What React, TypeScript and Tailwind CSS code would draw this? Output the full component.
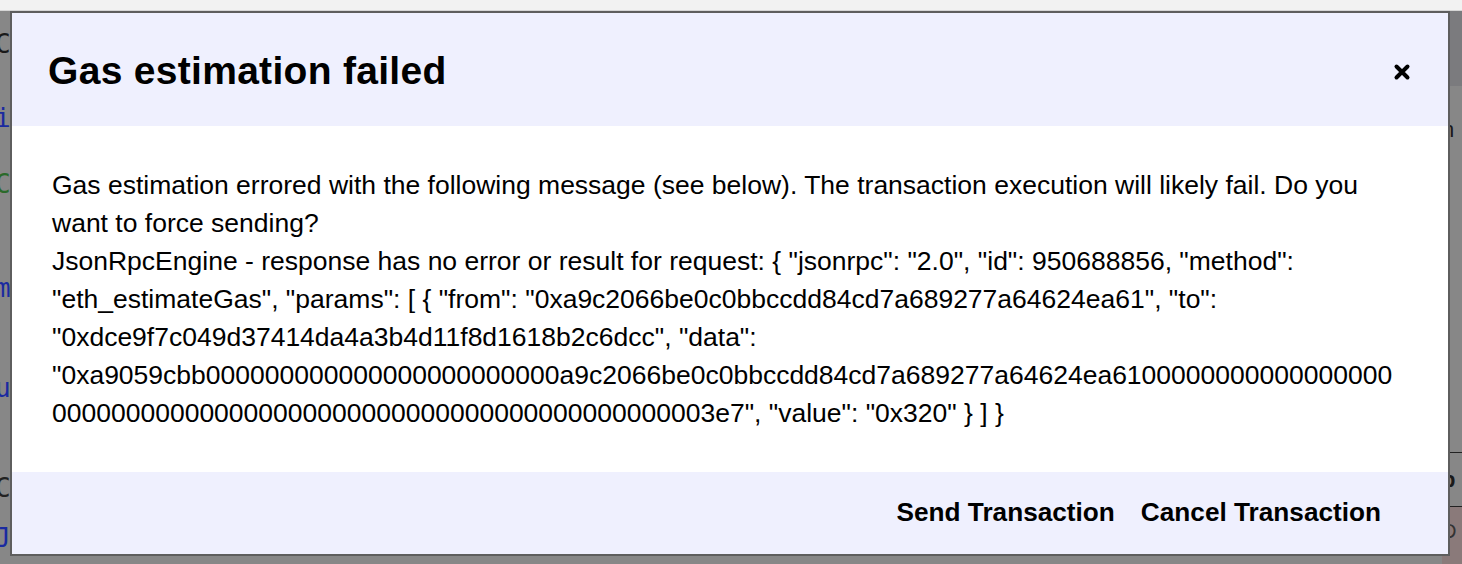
import React from 'react';

// Modal shown when gas estimation fails before sending a transaction

const MESSAGE =
  'Gas estimation errored with the following message (see below). The transaction execution will likely fail. Do you want to force sending?';

const CALL_DATA =
  '0xa9059cbb' + '0'.repeat(24) + 'a9c2066be0c0bbccdd84cd7a689277a64624ea61' + '0'.repeat(61) + '3e7';

const DETAIL =
  'JsonRpcEngine - response has no error or result for request: { "jsonrpc": "2.0", "id": 950688856, "method": "eth_estimateGas", "params": [ { "from": "0xa9c2066be0c0bbccdd84cd7a689277a64624ea61", "to": "0xdce9f7c049d37414da4a3b4d11f8d1618b2c6dcc", "data": "' +
  CALL_DATA +
  '", "value": "0x320" } ] }';

// glyphs of the code editor peeking out at the left of the dialog
const LEFT_LINES: { h: string; text: string; color: string }[] = [
  { h: 'h-[74px]', text: 'C', color: 'text-[#1a1a1a]' },
  { h: 'h-[66px]', text: 'i', color: 'text-[#1a2aa0]' },
  { h: 'h-[104px]', text: 'C', color: 'text-[#2a6a2a]' },
  { h: 'h-[100px]', text: 'm', color: 'text-[#1a2aa0]' },
  { h: 'h-[100px]', text: 'u', color: 'text-[#1a2aa0]' },
  { h: 'h-[50px]', text: 'C', color: 'text-[#222]' },
  { h: 'h-[30px]', text: 'J', color: 'text-[#1a2aa0]' },
];

function CloseIcon() {
  return (
    <svg width="18" height="18" viewBox="0 0 18 18" fill="none">
      <path d="M3.5 3.5 L14.5 14.5 M14.5 3.5 L3.5 14.5" stroke="#000" strokeWidth="4" strokeLinecap="round" />
    </svg>
  );
}

// Faint leftovers of the page behind the overlay
function Backdrop() {
  return (
    <div className="h-full flex flex-col">
      <div className="h-[11px] shrink-0 bg-[#f2f2f2] border-b border-[#d6d6d6]" />
      <div className="flex-1 flex justify-between bg-[#878787] overflow-hidden">
        <div className="w-[14px] flex flex-col pt-[18px] font-['DejaVu_Sans_Mono',monospace] text-[26px] leading-[30px] -ml-[5px]">
          {LEFT_LINES.map((l, i) => (
            <div key={i} className={`${l.h} shrink-0 ${l.color}`}>{l.text}</div>
          ))}
        </div>
        <div className="w-[20px] flex flex-col text-[22px] text-[#1a1a1a]">
          <div className="h-[75px] shrink-0 bg-[#7b7b7e]" />
          <div className="h-[60px] shrink-0 flex items-end">n</div>
          <div className="h-[135px] shrink-0 flex items-end">t</div>
          <div className="h-[172px] shrink-0 border-b border-[#222]" />
          <div className="h-[54px] shrink-0 border-b border-[#222] font-bold flex items-center">p</div>
          <div className="flex-1 bg-[#8a7a7a] text-[20px] text-[#333] leading-none pt-[14px]">D</div>
        </div>
      </div>
    </div>
  );
}

export default function App() {
  return (
    <div className="relative w-[1462px] h-[564px] overflow-hidden font-['Liberation_Sans',Arial,sans-serif] text-black">
      <Backdrop />

      <div className="absolute left-[12px] top-[13px] w-[1436px] h-[541px] flex flex-col bg-white shadow-[0_0_0_2px_#5e5e5e]">
        {/* Header */}
        <div className="h-[113px] shrink-0 flex items-center justify-between bg-[#eff0fe] pl-[36px] pr-[32px]">
          <h1 className="text-[39px] font-bold tracking-[0.3px] pt-[4px]">Gas estimation failed</h1>
          <button className="w-[28px] h-[28px] flex items-center justify-center mt-[4px]">
            <CloseIcon />
          </button>
        </div>

        {/* Body */}
        <div className="flex-1 pl-[40px] pr-[46px] pt-[40px] text-[26.5px] leading-[38px] break-words">
          <p>{MESSAGE}</p>
          <p>{DETAIL}</p>
        </div>

        {/* Footer */}
        <div className="h-[82px] shrink-0 flex items-center justify-end gap-[26px] bg-[#eff0fe] pr-[67px] text-[26.2px] font-bold">
          <button>Send Transaction</button>
          <button>Cancel Transaction</button>
        </div>
      </div>
    </div>
  );
}
